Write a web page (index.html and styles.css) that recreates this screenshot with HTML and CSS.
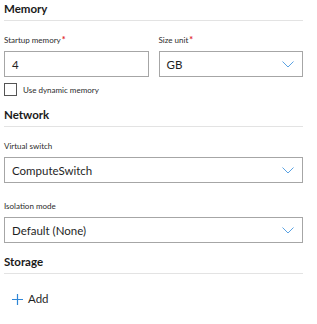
FILE: index.html
```html
<!DOCTYPE html>
<html lang="en">
<head>
    <meta charset="UTF-8">
    <title>VM settings</title>
    <link rel="stylesheet" href="styles.css">
</head>
<body>
    <div class="settings">
        <section class="group">
            <h2 class="group-title">Memory</h2>
            <div class="row">
                <div class="field">
                    <label class="field-label">Startup memory<span class="req">*</span></label>
                    <div class="box">4</div>
                </div>
                <div class="field">
                    <label class="field-label">Size unit<span class="req">*</span></label>
                    <div class="box">GB
                        <svg class="chevron" width="12" height="7" viewBox="0 0 12 7"><path d="M0.5 0.5 L6 6 L11.5 0.5" fill="none" stroke="#5ba2e2" stroke-width="1"/></svg>
                    </div>
                </div>
            </div>
            <div class="check">
                <span class="check-box"></span>
                <span class="check-text">Use dynamic memory</span>
            </div>
        </section>

        <section class="group">
            <h2 class="group-title">Network</h2>
            <div class="field">
                <label class="field-label">Virtual switch</label>
                <div class="box">ComputeSwitch
                    <svg class="chevron" width="12" height="7" viewBox="0 0 12 7"><path d="M0.5 0.5 L6 6 L11.5 0.5" fill="none" stroke="#5ba2e2" stroke-width="1"/></svg>
                </div>
            </div>
            <div class="field spaced">
                <label class="field-label">Isolation mode</label>
                <div class="box">Default (None)
                    <svg class="chevron" width="12" height="7" viewBox="0 0 12 7"><path d="M0.5 0.5 L6 6 L11.5 0.5" fill="none" stroke="#5ba2e2" stroke-width="1"/></svg>
                </div>
            </div>
        </section>

        <section class="group">
            <h2 class="group-title">Storage</h2>
            <button class="add-button">
                <svg width="11" height="11" viewBox="0 0 11 11"><path d="M5.5 0 V11 M0 5.5 H11" stroke="#2f86d6" stroke-width="1.2"/></svg>
                Add
            </button>
        </section>
    </div>
</body>
</html>
```

FILE: styles.css
```css
body {
    margin: 0;
    background-color: #ffffff;
    color: #1f1f1f;
    font-family: Lato, "Open Sans", sans-serif;
}
.settings {
    width: 299px;
    padding-left: 4px;
}
.group {
    margin-bottom: 10px;
}
.group-title {
    margin: 0;
    padding: 2px 0 4px;
    font-size: 11.5px;
    font-weight: 700;
    line-height: 14px;
    color: #1a1a1a;
    border-bottom: 1px solid #e3e3e3;
}
.row {
    display: flex;
    gap: 10px;
}
.row .field {
    flex: 1;
}
.field {
    margin-top: 14px;
}
.field.spaced {
    margin-top: 18px;
}
.field-label {
    display: block;
    font-size: 8px;
    line-height: 10px;
    color: #2b2b2b;
    margin-bottom: 6px;
}
.req {
    color: #e0262b;
    font-size: 9px;
    font-weight: 700;
    margin-left: 1px;
}
.box {
    box-sizing: border-box;
    height: 26px;
    border: 1px solid #a6a6a6;
    display: flex;
    align-items: center;
    justify-content: space-between;
    padding: 0 8px 0 7px;
    font-size: 11.5px;
    color: #1f1f1f;
}
.chevron {
    display: block;
}
.check {
    display: flex;
    align-items: center;
    gap: 6px;
    margin-top: 6px;
}
.check-box {
    box-sizing: border-box;
    width: 13px;
    height: 13px;
    border: 1px solid #555555;
}
.check-text {
    font-size: 8px;
    color: #2b2b2b;
}
.add-button {
    display: flex;
    align-items: center;
    gap: 5px;
    margin: 18px 0 0 8px;
    padding: 0;
    border: none;
    background: none;
    font-family: inherit;
    font-size: 11.5px;
    line-height: 14px;
    color: #1f1f1f;
}
```
